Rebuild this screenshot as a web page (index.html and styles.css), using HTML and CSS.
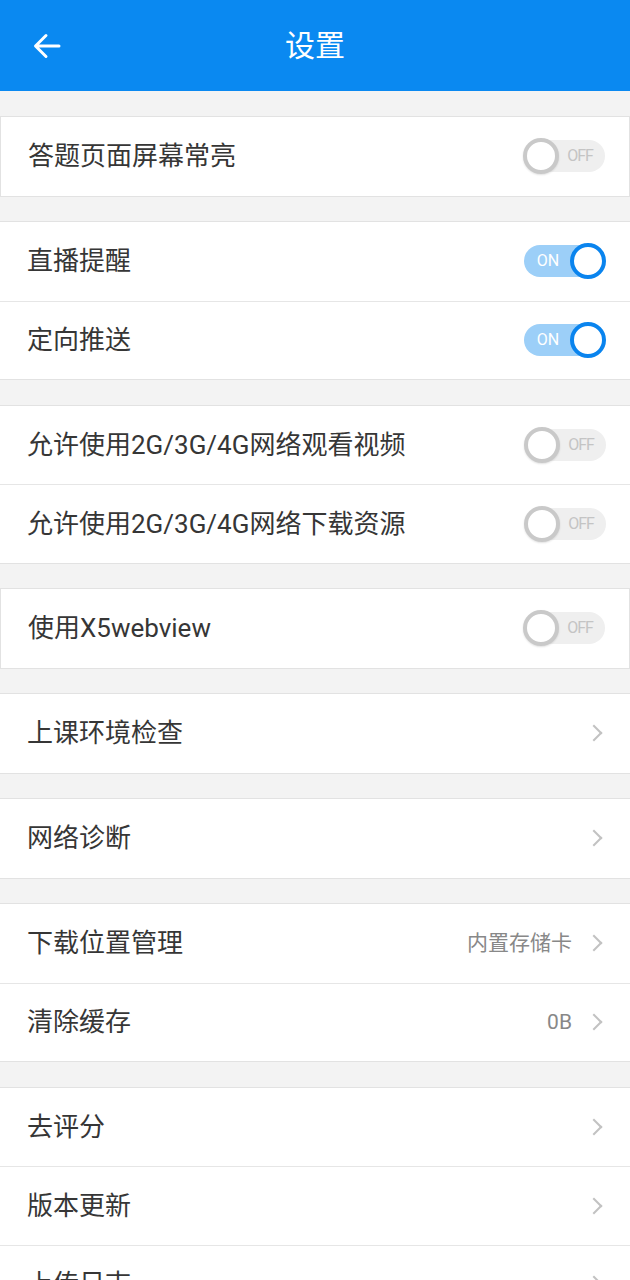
FILE: index.html
```html
<!DOCTYPE html>
<html lang="zh">
<head>
<meta charset="utf-8">
<title>设置</title>
<link rel="stylesheet" href="styles.css">
</head>
<body>
<header class="topbar">
  <svg class="back" width="30" height="26" viewBox="0 0 30 26"><path d="M27 13H4M14 2.5L3.5 13 14 23.5" fill="none" stroke="#fff" stroke-width="3" stroke-linecap="round" stroke-linejoin="round"/></svg>
  <h1 class="title">设置</h1>
</header>
<main class="content">
  <section class="group boxed first">
    <div class="row"><span class="label">答题页面屏幕常亮</span><span class="toggle off"><span class="knob"></span><span class="tt">OFF</span></span></div>
  </section>
  <section class="group">
    <div class="row"><span class="label">直播提醒</span><span class="toggle on"><span class="tt">ON</span><span class="knob"></span></span></div>
    <div class="row"><span class="label">定向推送</span><span class="toggle on"><span class="tt">ON</span><span class="knob"></span></span></div>
  </section>
  <section class="group">
    <div class="row"><span class="label">允许使用2G/3G/4G网络观看视频</span><span class="toggle off"><span class="knob"></span><span class="tt">OFF</span></span></div>
    <div class="row"><span class="label">允许使用2G/3G/4G网络下载资源</span><span class="toggle off"><span class="knob"></span><span class="tt">OFF</span></span></div>
  </section>
  <section class="group boxed">
    <div class="row"><span class="label">使用X5webview</span><span class="toggle off"><span class="knob"></span><span class="tt">OFF</span></span></div>
  </section>
  <section class="group">
    <div class="row"><span class="label">上课环境检查</span><span class="chev"></span></div>
  </section>
  <section class="group">
    <div class="row"><span class="label">网络诊断</span><span class="chev"></span></div>
  </section>
  <section class="group">
    <div class="row"><span class="label">下载位置管理</span><span class="value">内置存储卡</span><span class="chev"></span></div>
    <div class="row"><span class="label">清除缓存</span><span class="value">0B</span><span class="chev"></span></div>
  </section>
  <section class="group">
    <div class="row"><span class="label">去评分</span><span class="chev"></span></div>
    <div class="row"><span class="label">版本更新</span><span class="chev"></span></div>
    <div class="row"><span class="label">上传日志</span><span class="chev"></span></div>
  </section>
</main>
</body>
</html>
```
FILE: styles.css
```css
* { box-sizing: border-box; }
html, body { margin: 0; padding: 0; }
body {
  width: 630px;
  height: 1280px;
  overflow: hidden;
  background: #f3f3f3;
  font-family: Roboto, "Noto Sans CJK SC", sans-serif;
  color: #333;
}
.topbar {
  height: 91px;
  background: #0a89f1;
  display: flex;
  align-items: center;
  justify-content: center;
  position: relative;
}
.back {
  position: absolute;
  left: 32px;
  top: 33px;
}
.title {
  margin: 0;
  font-size: 30px;
  font-weight: 400;
  color: #fff;
  line-height: 1;
}
.content {
  display: flex;
  flex-direction: column;
  gap: 24.5px;
  padding-top: 25px;
}
.group {
  background: #fff;
  border-top: 1px solid #e2e2e2;
  border-bottom: 1px solid #e2e2e2;
}
.group.boxed {
  border-left: 1px solid #e2e2e2;
  border-right: 1px solid #e2e2e2;
}
.row {
  height: 78.5px;
  display: flex;
  align-items: center;
  padding: 0 24px 0 27px;
}
.row + .row { border-top: 1px solid #e6e6e6; }
.label {
  flex: 1;
  font-size: 26px;
  line-height: 1;
  color: #363636;
  white-space: nowrap;
}
.value {
  font-size: 21px;
  color: #888;
  margin-right: 16px;
  line-height: 1;
}
.chev {
  width: 12px;
  height: 12px;
  border-top: 2px solid #c2c2c2;
  border-right: 2px solid #c2c2c2;
  transform: rotate(45deg);
  margin-right: 6px;
}
.toggle {
  width: 82px;
  height: 36px;
  display: flex;
  align-items: center;
  position: relative;
}
.toggle::before {
  content: "";
  position: absolute;
  top: 2px;
  bottom: 2px;
  left: 3px;
  right: 0;
  border-radius: 16px;
  z-index: 0;
}
.toggle.off::before { background: #efefef; }
.toggle.on::before { background: #9ccff8; left: 0; right: 4px; }
.knob {
  width: 36px;
  height: 36px;
  border-radius: 50%;
  background: #fff;
  position: relative;
  z-index: 1;
  flex: none;
}
.toggle.off .knob {
  border: 4px solid #c9c9c9;
  box-shadow: 0 1px 2px rgba(0,0,0,0.12);
}
.toggle.on .knob {
  border: 4px solid #0a84ee;
}
.tt {
  position: relative;
  z-index: 1;
  font-family: Roboto, sans-serif;
  font-size: 16px;
  line-height: 1;
  flex: 1;
  text-align: center;
}
.toggle.off .tt { color: #c4c4c4; letter-spacing: -1px; padding-right: 4px; }
.toggle.on .tt { color: #fff; padding-left: 2px; }
```
